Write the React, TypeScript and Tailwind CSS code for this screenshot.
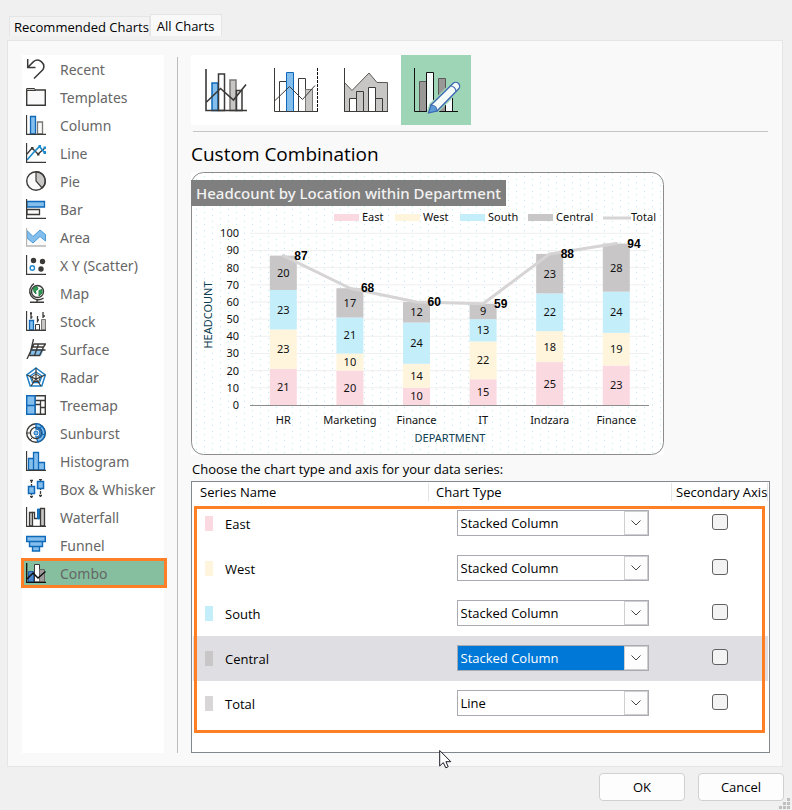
import React from "react";

const DARK = "#3b3a38";
const BLUE = "#83beec";
const BLUE_EDGE = "#0f69b8";
const GRAY = "#c8c6c4";

type Kind = { name: string; icon: React.ReactNode };

const axis = <path d="M.5 0V19.5H20" strokeWidth="1.3" />;

const kinds: Kind[] = [
  { name: "Recent", icon: <path d="M1.700 0V8.500H9.500M1.700 8.500 7.500 2.600A6.300 6.300 0 0 1 16.800 10.800L8 19.500" strokeWidth="1.5" /> },
  {
    name: "Templates",
    icon: (
      <>
        <path d="M.7 3H19.300V18.300H.7Z" fill="#fafafa" strokeWidth="1.4" />
        <path d="M.7 1.500H8.500L9.500 3.500H.7Z" fill={GRAY} />
      </>
    ),
  },
  {
    name: "Column",
    icon: (
      <>
        <path d="M4.500 1.500H9.500V19H4.500Z" fill={BLUE} stroke={BLUE_EDGE} strokeWidth="1.3" />
        <path d="M11.500 7H16.500V19H11.500Z" fill="#fafafa" stroke="#797774" strokeWidth="1.3" />
        {axis}
      </>
    ),
  },
  {
    name: "Line",
    icon: (
      <>
        <path d="M1 11 6 5 12 11 19 5" strokeWidth="1.400" />
        <path d="M1 17 8 9 13.500 3.500 18.500 9.500" stroke="#1e8bcd" strokeWidth="1.700" />
        <path d="M5 4h2.500v2.500H5zM11 10h2.500v2.500H11z" fill={DARK} stroke="none" />
        <path d="M12.500 2H15v3h-2.500zM17.500 8H20v3h-2.500zM17.500 3.500H20V6h-2.500z" fill="#1e8bcd" stroke="none" />
        {axis}
      </>
    ),
  },
  {
    name: "Pie",
    icon: (
      <>
        <circle cx="10" cy="10" r="9.300" fill="#fafafa" stroke="none" />
        <path d="M10 .7V10L16 17A9.300 9.300 0 0 0 10 .7Z" fill={GRAY} strokeWidth="1.200" />
        <circle cx="10" cy="10" r="9.300" strokeWidth="1.400" />
      </>
    ),
  },
  {
    name: "Bar",
    icon: (
      <>
        <path d="M1 2.500H18.500V8H1Z" fill={BLUE} stroke={BLUE_EDGE} strokeWidth="1.3" />
        <path d="M1 10.500H13.500V15.500H1Z" fill="#fafafa" strokeWidth="1.3" />
        {axis}
      </>
    ),
  },
  {
    name: "Area",
    icon: (
      <>
        <path d="M1 10 7 16 14 9.500 20 13V19H1Z" fill="#fafafa" stroke="none" />
        <path d="M1 3.500 7 9.500 14 3 19.500 7.500V14L14 9.500 7 16 1 11Z" fill={BLUE} stroke="#4a9bd8" />
        <path d="M.5 1V19H20" stroke="#b8b6b4" strokeWidth="1.300" />
      </>
    ),
  },
  {
    name: "X Y (Scatter)",
    icon: (
      <>
        <g fill={DARK} stroke="none">
          <circle cx="7.500" cy="5.500" r="2.700" />
          <circle cx="16.500" cy="6.500" r="2.700" />
          <circle cx="15" cy="14" r="2.700" />
        </g>
        <circle cx="6.300" cy="13" r="2.200" stroke="#1e8bcd" strokeWidth="1.400" />
        {axis}
      </>
    ),
  },
  {
    name: "Map",
    icon: (
      <>
        <circle cx="11.500" cy="8.500" r="6" fill="#fafafa" strokeWidth="1.400" />
        <path d="M7.500 5 11 3.500 12 6 9.500 8 10 11 8 9ZM13 7.500 16 6.500 16 10 13 13Z" fill="#2f9e55" stroke="#2a8348" />
        <path d="M8 .7A8.600 8.600 0 1 0 17.500 15M4 19.300H18M11 17V19.500" strokeWidth="1.400" />
      </>
    ),
  },
  {
    name: "Stock",
    icon: (
      <>
        <path d="M3.500 9.500H7.500V19H3.500Z" fill={BLUE} stroke={BLUE_EDGE} strokeWidth="1.3" />
        <path d="M9.500 13.500H13.500V19H9.500Z" fill="#fafafa" />
        <path d="M15.500 8.500H19.500V19H15.500Z" fill={GRAY} stroke="#797774" />
        <path d="M5 1V8M11.500 5V11.500M17 1V7M4 2.500H6M11.500 9H13M17 5H19M5 6H6.500" strokeWidth="1.3" />
        {axis}
      </>
    ),
  },
  {
    name: "Surface",
    icon: (
      <>
        <path d="M5 10 3 17H15L18 10Z" fill={BLUE} stroke="none" />
        <path d="M7.500 0 4 15M1 20 8 5H19L13.500 16.500H3.500M5.500 11H19.500M12.500 5 8.500 16.500M7 8H17.500L19.500 5" strokeWidth="1.300" />
      </>
    ),
  },
  {
    name: "Radar",
    icon: (
      <>
        <path d="M10 1 19.300 8 15.800 19H4.200L.7 8Z" stroke="#1e7fc4" strokeWidth="1.500" />
        <path d="M10 5 16 9 13.500 15.500H6.500L4 9Z" stroke="#1e7fc4" strokeWidth="1.300" />
        <path d="M10 1V12M19 8 10 12 1 8M5 19 10 12 15 19" strokeWidth="1.200" />
        <path d="M10 7 14.500 10 12.500 14.500H7.500L5.500 10Z" />
      </>
    ),
  },
  {
    name: "Treemap",
    icon: (
      <>
        <path d="M9 .7H19.300V19.300H9Z" fill="#fafafa" strokeWidth="1.400" />
        <path d="M9 5.500H19M14.500 6V19M14 12.500H19M9 9.500H14" strokeWidth="1.300" />
        <path d="M.7 .7H9V19.300H.7ZM.7 10.500H9" fill={BLUE} stroke={BLUE_EDGE} strokeWidth="1.400" />
      </>
    ),
  },
  {
    name: "Sunburst",
    icon: (
      <>
        <circle cx="10" cy="10" r="9.300" fill="#fafafa" strokeWidth="1.400" />
        <path d="M10 .7A9.300 9.300 0 0 1 12 19L10 14A4 4 0 0 0 10 6Z" fill={BLUE} stroke={BLUE_EDGE} strokeWidth="1.300" />
        <circle cx="10" cy="10" r="5.600" strokeWidth="1.200" />
        <path d="M10 4.400A5.600 5.600 0 0 1 13 15M13.500 5 16.500 3M15.500 11 19 12" stroke={BLUE_EDGE} strokeWidth="1.200" />
        <path d="M1 10H4.500M4 17 6.500 14.500" />
        <circle cx="10" cy="10" r="2" fill={BLUE} stroke={BLUE_EDGE} />
      </>
    ),
  },
  {
    name: "Histogram",
    icon: (
      <>
        <path d="M2.500 7.500H7.500V1.500H12.500V11.500H18.500V19H2.500Z" fill={BLUE} stroke={BLUE_EDGE} strokeWidth="1.3" />
        <path d="M7.500 7V19M12.500 11V19" stroke={BLUE_EDGE} strokeWidth="1.3" />
        {axis}
      </>
    ),
  },
  {
    name: "Box & Whisker",
    icon: (
      <>
        <path d="M5.500 1V19M14.500 0V18M4 1.500H7M4 17.500H7M13 .5H16M13 16.500H16" strokeDasharray="3 1" strokeWidth="1.3" />
        <path d="M2.500 7.500H8.500V14.500H2.500Z" fill={BLUE} stroke={BLUE_EDGE} strokeWidth="1.500" />
        <path d="M11.500 2.500H17.500V9.500H11.500Z" fill={BLUE} stroke={BLUE_EDGE} strokeWidth="1.500" />
      </>
    ),
  },
  {
    name: "Waterfall",
    icon: (
      <>
        <path d="M3.500 5.500H6.500V19H3.500Z" fill={GRAY} strokeWidth="1.3" />
        <path d="M6.500 5.500H8.500V11.500H11" strokeWidth="1.3" />
        <path d="M11.500 2H13.500V12H11.500Z" fill="#1e7fc4" stroke={BLUE_EDGE} />
        <path d="M14.500 1.500H18.500V19H14.500Z" fill={GRAY} strokeWidth="1.3" />
        {axis}
      </>
    ),
  },
  {
    name: "Funnel",
    icon: (
      <path
        d="M.7 1.500H19.300V6.500H.7ZM3.500 6.500H16.500V11.500H3.500ZM6.500 11.500H13.500V16H6.500Z"
        fill={BLUE}
        stroke={BLUE_EDGE}
        strokeWidth="1.400"
      />
    ),
  },
  {
    name: "Combo",
    icon: (
      <>
        <path d="M2.500 8.500H7.500V19H2.500Z" fill="#4a86c8" stroke="#1d5ca6" />
        <path d="M8.500 1.500H13.500V19H8.500Z" fill="#fff" />
        <path d="M13.500 6.500H18.500V19H13.500Z" fill="#9d9b99" stroke="#6b6967" />
        <path d="M1 16 7 10 12 15 19.500 8.500" stroke="#111" strokeWidth="1.500" />
        <path d="M.7 0V19.500H20" stroke="#111" strokeWidth="1.300" />
      </>
    ),
  },
];

const thumbs: Kind[] = [
  {
    name: "Clustered Column - Line",
    icon: (
      <>
        <path d="M21 28H27V55.500H21Z" fill={BLUE} stroke={BLUE_EDGE} strokeWidth="1.5" />
        <path d="M27.500 19H33.500V55.500H27.500Z" fill="#fff" strokeWidth="1.5" />
        <path d="M39 25H45V55.500H39Z" fill={GRAY} stroke="#797774" strokeWidth="1.5" />
        <path d="M45.500 35.500H51V55.500H45.500Z" fill="#fafafa" strokeWidth="1.5" />
        <path d="M15 47.500 29.500 33.500 42.500 45 55 29.500M15 14V55.500H56" strokeWidth="1.600" />
      </>
    ),
  },
  {
    name: "Clustered Column - Line on Secondary Axis",
    icon: (
      <>
        <path d="M18.500 26.500H25.500V56.500H18.500ZM37.500 23.500H44.500V56.500H37.500Z" fill="#fff" />
        <path d="M44.500 34.500H51.500V56.500H44.500Z" fill={GRAY} stroke="#797774" />
        <path d="M25.500 17.500H32.500V56.500H25.500Z" fill={BLUE} stroke={BLUE_EDGE} />
        <path d="M13.500 46 28.500 31.500 41.500 44.500 54 30.500M13.500 13V56.500H57" />
        <path d="M56.500 13V56" stroke="#111" strokeDasharray="3 1" />
      </>
    ),
  },
  {
    name: "Stacked Area - Clustered Column",
    icon: (
      <>
        <path d="M13.500 27.500 21 35.500 38 18 46 27.500H56.500V56.500H13.500Z" fill={GRAY} stroke="#5b5957" />
        <path d="M18.500 43.500H25.500V56.500H18.500ZM37.500 32.500H44.500V56.500H37.500Z" fill="#fff" />
        <path d="M25.500 36.500H32.500V56.500H25.500ZM44.500 43.500H51.500V56.500H44.500Z" fill={GRAY} />
        <path d="M13.500 13V56.500H57" />
      </>
    ),
  },
  {
    name: "Custom Combination",
    icon: (
      <>
        <g stroke="#111">
          <path d="M18.500 26.500H25.500V56.500H18.500ZM37.500 23.500H44.500V56.500H37.500Z" fill="#9a9896" stroke="#5b5957" />
          <path d="M25.500 17.500H32.500V56.500H25.500ZM44.500 38.500H51.500V56.500H44.500Z" fill="#f4faf7" />
          <path d="M13.500 13V56.500H57" />
        </g>
        <path d="M27.500 58 30 50 52 28.500A3.800 3.800 0 0 1 57.500 34L36 56Z" fill="#9fd5b7" stroke="#9fd5b7" strokeWidth="4" />
        <path d="M30 50 52 28.500A3.800 3.800 0 0 1 57.500 34L36 56Z" fill="#f4faf7" stroke="#3c67b1" strokeWidth="1.300" />
        <path d="M27.500 58 30 50C33.500 50 36 52.500 36 56Z" fill="#5b9bd5" stroke="#3c67b1" strokeWidth="1.200" />
        <path d="M49.500 31C52.500 31 55 33.500 55 36.500" stroke="#3c67b1" strokeWidth="1.200" />
      </>
    ),
  },
];

const columns = [
  { dept: "HR", parts: [21, 23, 23, 20], total: 87 },
  { dept: "Marketing", parts: [20, 10, 21, 17], total: 68 },
  { dept: "Finance", parts: [10, 14, 24, 12], total: 60 },
  { dept: "IT", parts: [15, 22, 13, 9], total: 59 },
  { dept: "Indzara", parts: [25, 18, 22, 23], total: 88 },
  { dept: "Finance", parts: [23, 19, 24, 28], total: 94 },
];

const seriesColors = ["#fbd9e1", "#fff5dd", "#c5eefb", "#c8c6c7"];

const legend = [
  { name: "East", x: 143 },
  { name: "West", x: 204 },
  { name: "South", x: 269 },
  { name: "Central", x: 337 },
];

const ZERO = 233;
const UNIT = 1.717;
const yOf = (v: number) => ZERO - v * UNIT;
const xOf = (i: number) => 92.3 + i * 66.6;

function PreviewChart() {
  return (
    <svg
      width="473"
      height="283"
      viewBox="0 0 473 283"
      role="img"
      aria-label="Headcount by Location within Department"
      className="mt-1 block shrink-0 font-['Noto_Sans','Open_Sans',sans-serif]"
    >
      <defs>
        <pattern id="dots" width="16" height="6" patternUnits="userSpaceOnUse">
          <rect x="5" y="1" width="1" height="1" fill="#bfe9f5" />
          <rect x="13" y="4" width="1" height="1" fill="#bfe9f5" />
        </pattern>
      </defs>
      <rect width="473" height="283" fill="#fff" />
      <rect x=".5" y=".5" width="472" height="282" rx="12" fill="url(#dots)" stroke="#8c8c8c" />
      <rect x="0" y="8" width="315" height="26" fill="#7f7f7f" />
      <text x="5" y="27" fontSize="15" fontWeight="500" fill="#f2f2f2">
        Headcount by Location within Department
      </text>

      {legend.map((l, i) => (
        <g key={l.name}>
          <rect x={l.x} y="42" width="25" height="7" fill={seriesColors[i]} />
          <text x={l.x + 28} y="49" fontSize="11" fill="#111">
            {l.name}
          </text>
        </g>
      ))}
      <path d="M412 46H440" stroke="#d6d4d5" strokeWidth="3" />
      <text x="440" y="49" fontSize="11" fill="#111">
        Total
      </text>

      {Array.from({ length: 11 }, (_, i) => i * 10).map((v) => (
        <g key={v}>
          {v > 0 && <path d={`M59 ${yOf(v)}H458`} stroke="#efefef" />}
          <text x="48" y={yOf(v) + 4} fontSize="11" textAnchor="end" fill="#111">
            {v}
          </text>
        </g>
      ))}

      {columns.map((c, i) => {
        let base = 0;
        return (
          <g key={i} fontSize="11" textAnchor="middle" fill="#111">
            {c.parts.map((p, s) => {
              const top = yOf(base + p);
              base += p;
              return (
                <g key={s}>
                  <rect x={xOf(i) - 13.5} y={top} width="27" height={p * UNIT} fill={seriesColors[s]} />
                  <text x={xOf(i)} y={top + (p * UNIT) / 2 + 4}>
                    {p}
                  </text>
                </g>
              );
            })}
            <text x={xOf(i)} y="252">
              {c.dept}
            </text>
          </g>
        );
      })}
      <path d="M59 233.500H458" stroke="#8c8c8c" />
      <polyline
        points={columns.map((c, i) => `${xOf(i)},${yOf(c.total)}`).join(" ")}
        fill="none"
        stroke="#d6d4d5"
        strokeWidth="3"
        strokeLinejoin="round"
        strokeLinecap="round"
      />
      {columns.map((c, i) => (
        <text
          key={i}
          x={xOf(i) + 11}
          y={yOf(c.total) + 4}
          fontSize="12"
          fontWeight="700"
          fill="#000"
          className="font-['Liberation_Sans',Arial,sans-serif]"
        >
          {c.total}
        </text>
      ))}
      <text x="259" y="270" fontSize="11" textAnchor="middle" fill="#0e4052">
        DEPARTMENT
      </text>
      <text transform="translate(21 143) rotate(-90)" fontSize="11" textAnchor="middle" fill="#0e4052">
        HEADCOUNT
      </text>
    </svg>
  );
}

const series = [
  { name: "East", swatch: "bg-[#fbd9e1]", type: "Stacked Column" },
  { name: "West", swatch: "bg-[#fff5dd]", type: "Stacked Column" },
  { name: "South", swatch: "bg-[#c5eefb]", type: "Stacked Column" },
  { name: "Central", swatch: "bg-[#c8c6c7]", type: "Stacked Column", active: true },
  { name: "Total", swatch: "bg-[#d8d6d7]", type: "Line" },
];

function SeriesTable() {
  return (
    <div className="relative mt-0.5 flex-1 border border-[#828790] bg-white p-px">
      <table className="w-full table-fixed border-collapse text-left">
        <thead>
          <tr className="h-[18px]">
            <th scope="col" className="border-r border-[#e5e5e5] p-0 pl-[7px] font-normal">
              Series Name
            </th>
            <th scope="col" className="w-[243px] border-r border-[#e5e5e5] p-0 pl-[7px] font-normal">
              Chart Type
            </th>
            <th scope="col" className="w-24 border-r border-[#e5e5e5] p-0 pl-1 font-normal whitespace-nowrap">
              Secondary Axis
            </th>
          </tr>
        </thead>
        <tbody>
          {series.map((s) => (
            <tr key={s.name} className={s.active ? "h-[45px] bg-[#dfdee3]" : "h-[45px]"}>
              <td className="p-0 pl-3">
                <span className="flex items-center gap-3">
                  <span className={`h-[15px] w-2 ${s.swatch}`} />
                  {s.name}
                </span>
              </td>
              <td className="p-0 pb-0.5 pl-[28px]">
                <div className="relative h-[26px] w-[192px]">
                  <select
                    aria-label={`Chart type for ${s.name}`}
                    defaultValue={s.type}
                    className={
                      s.active
                        ? "h-full w-full appearance-none rounded-none border border-[#a9abb1] bg-[#0078d7] pl-[3px] text-white"
                        : "h-full w-full appearance-none rounded-none border border-[#a9abb1] bg-white pl-[3px] text-black"
                    }
                  >
                    <option>Stacked Column</option>
                    <option>Line</option>
                  </select>
                  <span className="pointer-events-none absolute inset-y-px right-px flex w-6 items-center justify-center border border-[#cfcfcf] bg-[#fdfdfd]">
                    <svg width="10" height="6" viewBox="0 0 10 6" fill="none" stroke="#444">
                      <path d="M.5 .5 5 5 9.500 .5" />
                    </svg>
                  </span>
                </div>
              </td>
              <td className="p-0 pb-1">
                <input
                  type="checkbox"
                  aria-label={`Secondary axis for ${s.name}`}
                  className="mx-auto block size-4 appearance-none rounded-[3px] border border-[#626262] bg-[#f3f3f3]"
                />
              </td>
            </tr>
          ))}
        </tbody>
      </table>
      <div className="pointer-events-none absolute top-6 right-1 bottom-[19px] left-0.5 border-3 border-[#ff7f27]" />
      <svg
        className="pointer-events-none absolute -bottom-[17px] left-[247px]"
        width="13"
        height="20"
        viewBox="0 0 13 20"
      >
        <path d="M.7 1.500V17L4.300 13.600 6.800 18.800 9.200 17.700 6.900 12.700H11.800Z" fill="#fff" stroke="#1b1b26" />
      </svg>
    </div>
  );
}

export default function App() {
  return (
    <div className="flex min-h-screen flex-col bg-[#f0f0f0] font-['Open_Sans','Noto_Sans',sans-serif] text-[13px] leading-4 text-black">
      <div role="tablist" className="flex h-10 items-end pb-1 pl-[9px]">
        <button role="tab" aria-selected="false" className="h-5 border border-b-0 border-[#e5e5e5] bg-[#f3f3f3] pl-1 whitespace-nowrap">
          Recommended Charts
        </button>
        <button role="tab" aria-selected="true" className="h-[22px] border border-b-0 border-[#e5e5e5] bg-[#f9f9f9] px-1.5 whitespace-nowrap">
          All Charts
        </button>
      </div>

      <main className="mr-[9px] ml-[7px] flex flex-1 border border-[#e5e5e5] bg-[#f9f9f9] pt-3.5 pr-3 pb-[13px] pl-3.5">
        <nav aria-label="Chart kinds" className="w-[142px] shrink-0 bg-white font-['Noto_Sans','Open_Sans',sans-serif] text-[14px] text-[#666]">
          {kinds.map((k) => {
            const current = k.name === "Combo";
            return (
              <button
                key={k.name}
                aria-current={current}
                className={
                  current
                    ? "flex h-7 w-36 items-center gap-3.5 bg-[#86bf9f] pl-1 outline-3 -outline-offset-2 outline-[#ff7f27]"
                    : "flex h-7 w-full items-center gap-3.5 pl-1"
                }
              >
                <svg width="20" height="20" viewBox="0 0 20 20" fill="none" stroke={DARK} className="shrink-0">
                  {k.icon}
                </svg>
                <span className="pt-0.5 whitespace-nowrap">{k.name}</span>
              </button>
            );
          })}
        </nav>

        <div className="mx-[13px] mt-0.5 w-px shrink-0 bg-[#bdbdbd]" />

        <section className="flex min-w-0 flex-1 flex-col">
          <div className="flex">
            {thumbs.map((t, i) => (
              <button key={t.name} aria-label={t.name} className={i === 3 ? "bg-[#9fd5b7]" : "bg-white"}>
                <svg width="70" height="70" viewBox="0 0 70 70" fill="none" stroke={DARK} className="block">
                  {t.icon}
                </svg>
              </button>
            ))}
          </div>
          <hr className="mx-0.5 mt-1.5 border-[#c6c6c6]" />
          <h2 className="mt-2 text-[19px] leading-7">Custom Combination</h2>
          <PreviewChart />
          <p className="mt-1 pl-px leading-5">Choose the chart type and axis for your data series:</p>
          <SeriesTable />
        </section>
      </main>

      <footer className="relative flex justify-end gap-[13px] pt-1.5 pr-2 pb-[9px]">
        <button className="h-7 w-[86px] rounded border border-[#d0d0d0] bg-[#fdfdfd]">OK</button>
        <button className="h-7 w-[86px] rounded border border-[#d0d0d0] bg-[#fdfdfd]">Cancel</button>
        <svg className="absolute right-0 bottom-0" width="13" height="12" viewBox="0 0 13 12" fill="#bfbfbf">
          <path d="M8 0h3v3H8zM4 4h3v3H4zM8 4h3v3H8zM0 8h3v3H0zM4 8h3v3H4zM8 8h3v3H8z" />
        </svg>
      </footer>
    </div>
  );
}
